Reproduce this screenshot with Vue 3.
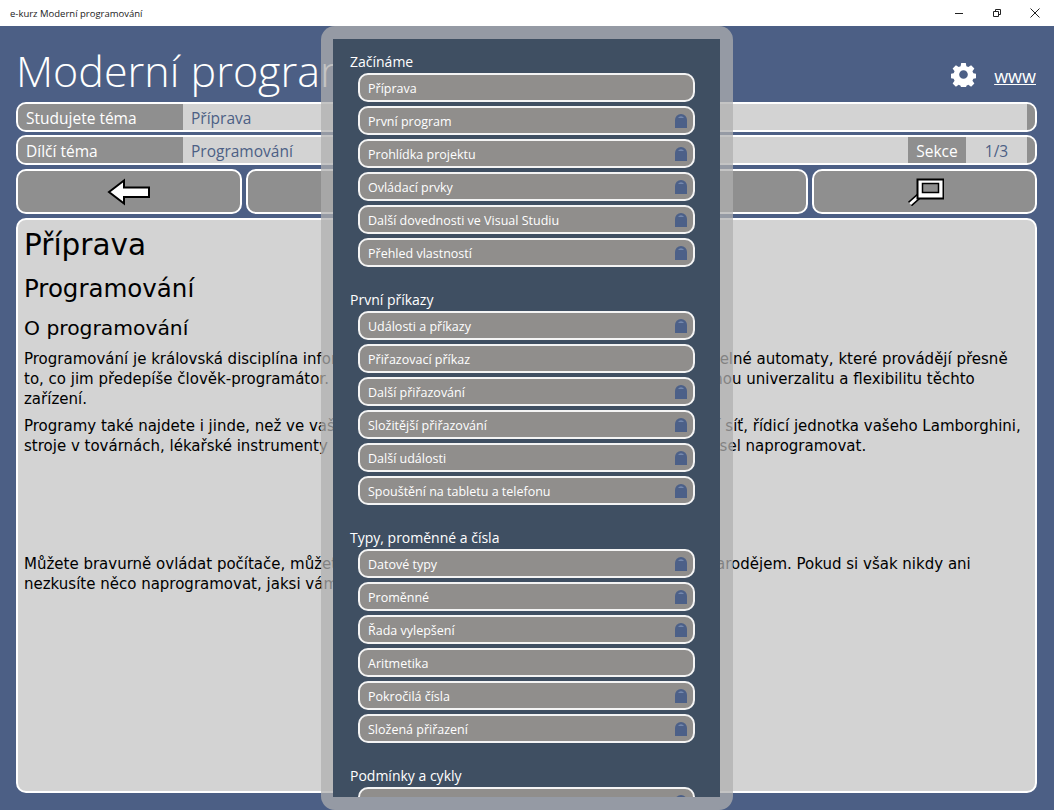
<template>
  <div class="window">
    <div class="titlebar">
      <span class="app-name">e-kurz Moderní programování</span>
      <div class="win-buttons">
        <svg width="10" height="10" viewBox="0 0 10 10"><path d="M1 5.500h8" stroke="#222" fill="none" /></svg>
        <svg width="10" height="10" viewBox="0 0 10 10"><path d="M1.500 3.500h5v5h-5zM3.500 3.500v-2h5v5h-2" stroke="#222" fill="none" /></svg>
        <svg width="10" height="10" viewBox="0 0 10 10"><path d="M.5 .5l9 9M9.500 .5l-9 9" stroke="#222" fill="none" /></svg>
      </div>
    </div>

    <div class="page">
      <header class="top">
        <h1 class="title">Moderní programování</h1>
        <div class="top-links">
          <svg class="gear" width="25" height="25" viewBox="0 0 26 26">
            <path fill="#fff" fill-rule="evenodd" d="M10.600 1h4.800l.6 3.400 2 .9 2.900-2 3.400 3.400-2 2.900.9 2 3.300.6v4.600l-3.300.6-.9 2 2 2.900-3.400 3.400-2.900-2-2 .9-.6 3.300h-4.800l-.6-3.300-2-.9-2.900 2-3.400-3.400 2-2.900-.9-2-3.300-.6v-4.600l3.300-.6.9-2-2-2.900 3.400-3.400 2.900 2 2-.9zM13 8.500a4.500 4.500 0 1 0 0 9 4.500 4.500 0 0 0 0-9z" />
          </svg>
          <a class="www">www</a>
        </div>
      </header>

      <div class="info-row">
        <span class="info-label">Studujete téma</span>
        <span class="info-value">Příprava</span>
        <span class="info-end"></span>
      </div>
      <div class="info-row">
        <span class="info-label">Dílčí téma</span>
        <span class="info-value">Programování</span>
        <span class="section-label">Sekce</span>
        <span class="section-count">1/3</span>
        <span class="info-end"></span>
      </div>

      <div class="nav-buttons">
        <button class="nav-btn">
          <svg width="44" height="28" viewBox="0 0 44 28">
            <path d="M2 14L17 2.500V9.500h25v9.500H17v6.500z" fill="#fff" stroke="#000" stroke-width="2" />
          </svg>
        </button>
        <button class="nav-btn"></button>
        <button class="nav-btn">
          <svg width="38" height="28" viewBox="0 0 38 28">
            <path d="M13 18L4 26" stroke="#000" stroke-width="6" fill="none" />
            <path d="M13 18L4 26" stroke="#fff" stroke-width="3" fill="none" />
            <rect x="11.500" y="1.500" width="26" height="19" fill="#fff" stroke="#000" stroke-width="2" />
            <rect x="16.500" y="5.500" width="16" height="9" fill="#8f8f8f" stroke="#000" stroke-width="1.500" />
          </svg>
        </button>
      </div>

      <main class="content">
        <h2 class="h-topic">Příprava</h2>
        <h3 class="h-sub">Programování</h3>
        <h4 class="h-part">O programování</h4>
        <p>Programování je královská disciplína informatiky. Počítače jsou jen velmi rychlé programovatelné automaty, které provádějí přesně to, co jim předepíše člověk-programátor. A právě ty programy jsou tím, co přinese onu úžasnou univerzalitu a flexibilitu těchto zařízení.</p>
        <p>Programy také najdete i jinde, než ve vašem počítači či telefonu: používá je televize, mobilní síť, řídicí jednotka vašeho Lamborghini, stroje v továrnách, lékařské instrumenty a spousta dalších zařízení, které někdo nejdříve musel naprogramovat.</p>
        <p class="later">Můžete bravurně ovládat počítače, můžete znát všechny programy a být v očích ostatních čarodějem. Pokud si však nikdy ani nezkusíte něco naprogramovat, jaksi vám uniká to nejzajímavější.</p>
      </main>
    </div>

    <aside class="menu">
      <div class="menu-inner">
        <section v-for="group in groups" :key="group.name" class="menu-group">
          <div class="group-name">{{ group.name }}</div>
          <div v-for="item in group.items" :key="item.label" class="menu-item">
            <span class="item-label">{{ item.label }}</span>
            <svg v-if="item.locked" class="lock" width="12" height="14" viewBox="0 0 12 14">
              <path d="M0 14V6a6 6 0 0 1 12 0v8z" fill="#4c6088" />
              <path d="M3 4a3.500 3.500 0 0 1 6 0z" fill="#7488ad" />
            </svg>
          </div>
        </section>
      </div>
    </aside>
  </div>
</template>

<script setup>
const groups = [
  {
    name: 'Začínáme',
    items: [
      { label: 'Příprava', locked: false },
      { label: 'První program', locked: true },
      { label: 'Prohlídka projektu', locked: true },
      { label: 'Ovládací prvky', locked: true },
      { label: 'Další dovednosti ve Visual Studiu', locked: true },
      { label: 'Přehled vlastností', locked: true },
    ],
  },
  {
    name: 'První příkazy',
    items: [
      { label: 'Události a příkazy', locked: true },
      { label: 'Přiřazovací příkaz', locked: false },
      { label: 'Další přiřazování', locked: true },
      { label: 'Složitější přiřazování', locked: true },
      { label: 'Další události', locked: true },
      { label: 'Spouštění na tabletu a telefonu', locked: true },
    ],
  },
  {
    name: 'Typy, proměnné a čísla',
    items: [
      { label: 'Datové typy', locked: true },
      { label: 'Proměnné', locked: true },
      { label: 'Řada vylepšení', locked: true },
      { label: 'Aritmetika', locked: false },
      { label: 'Pokročilá čísla', locked: true },
      { label: 'Složená přiřazení', locked: true },
    ],
  },
  {
    name: 'Podmínky a cykly',
    items: [{ label: 'Podmínky', locked: true }],
  },
]
</script>

<style>
html,
body {
  margin: 0;
  overflow: hidden;
}
</style>

<style scoped>
.window {
  position: relative;
  width: 1054px;
  height: 810px;
  overflow: hidden;
  background: #4c5f85;
  font-family: "Open Sans", "Noto Sans", sans-serif;
}

.titlebar {
  height: 26px;
  background: #fff;
  display: flex;
  align-items: center;
  justify-content: space-between;
  padding: 0 14px 0 10px;
  font-size: 9.5px;
  color: #222;
}

.win-buttons {
  display: flex;
  gap: 28px;
}

.win-buttons svg {
  display: block;
}

.page {
  padding: 0 17px 0 16px;
}

.top {
  height: 76px;
  padding-top: 12px;
  box-sizing: border-box;
  display: flex;
  align-items: center;
  justify-content: space-between;
}

.title {
  margin: 0;
  font-size: 43px;
  font-weight: 300;
  color: #fff;
  white-space: nowrap;
}

.top-links {
  display: flex;
  align-items: center;
  gap: 18px;
  margin: 8px 1px 0 0;
}

.www {
  margin-top: 4px;
  color: #fff;
  font-size: 18px;
  text-decoration: underline;
}

.info-row {
  display: flex;
  height: 30px;
  margin-bottom: 3px;
  box-sizing: border-box;
  border: 2px solid #fff;
  border-radius: 10px;
  overflow: hidden;
  background: #d3d3d3;
  font-size: 15.500px;
  line-height: 28px;
}

.info-label {
  width: 165px;
  padding-left: 8px;
  box-sizing: border-box;
  background: #8f8f8f;
  color: #fff;
}

.info-value {
  flex: 1;
  padding-left: 8px;
  color: #4c5f85;
}

.section-label {
  width: 58px;
  background: #8f8f8f;
  color: #fff;
  text-align: center;
}

.section-count {
  width: 61px;
  color: #4c5f85;
  text-align: center;
}

.info-end {
  width: 8px;
  background: #8f8f8f;
}

.nav-buttons {
  display: grid;
  grid-template-columns: 226px 1fr 225px;
  gap: 4px;
  margin: 4px 0;
}

.nav-btn {
  height: 45px;
  padding: 0;
  display: flex;
  align-items: center;
  justify-content: center;
  box-sizing: border-box;
  border: 2px solid #fff;
  border-radius: 10px;
  background: #8f8f8f;
}

.content {
  height: 575px;
  box-sizing: border-box;
  padding: 2px 6px;
  border: 2px solid #fff;
  border-radius: 10px;
  background: #d3d3d3;
  color: #000;
  font-family: "DejaVu Sans", sans-serif;
}

.h-topic,
.h-sub,
.h-part {
  margin: 0;
  font-weight: 400;
}

.h-topic {
  font-size: 29.500px;
  line-height: 47px;
}

.h-sub {
  font-size: 24.500px;
  line-height: 40px;
}

.h-part {
  font-size: 20.300px;
  line-height: 38px;
  margin-bottom: 2px;
}

.content p {
  margin: 0 0 7px;
  font-size: 15px;
  line-height: 20px;
}

.content p.later {
  margin-top: 98px;
}

.menu {
  position: absolute;
  top: 26px;
  left: 321px;
  width: 412px;
  height: 784px;
  box-sizing: border-box;
  padding: 13px 13px 13px 12px;
  border-radius: 14px;
  background: rgba(176, 176, 176, 0.74);
}

.menu-inner {
  height: 100%;
  overflow: hidden;
  background: #3f4f62;
  padding: 12px 25px 0 17px;
  box-sizing: border-box;
}

.menu-group {
  margin-bottom: 22px;
}

.group-name {
  height: 22px;
  font-size: 14px;
  line-height: 21px;
  color: #fff;
}

.menu-item {
  display: flex;
  align-items: center;
  justify-content: space-between;
  height: 29px;
  margin: 0 0 4px 8px;
  padding: 0 6px 0 8px;
  box-sizing: border-box;
  border: 2px solid #f4f4f4;
  border-radius: 10px;
  background: #908e8c;
  color: #fff;
  font-size: 12.500px;
}

.item-label {
  padding-top: 2px;
}

.lock {
  display: block;
}
</style>
